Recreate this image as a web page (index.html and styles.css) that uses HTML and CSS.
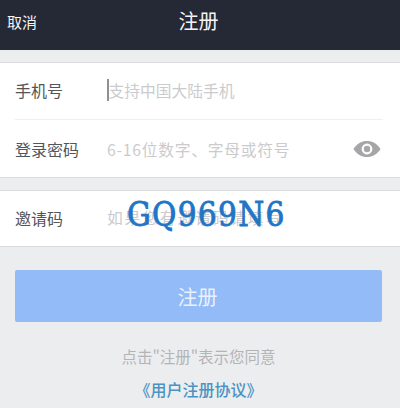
FILE: index.html
```html
<!DOCTYPE html>
<html lang="zh">
<head>
<meta charset="utf-8">
<title>注册</title>
<link rel="stylesheet" href="styles.css">
</head>
<body>
<header class="topbar">
  <span class="cancel">取消</span>
  <span class="title">注册</span>
</header>
<section class="group group-first">
  <div class="row row-divided">
    <span class="label">手机号</span>
    <span class="caret"></span>
    <span class="hint">支持中国大陆手机</span>
  </div>
  <div class="row row-second">
    <span class="label">登录密码</span>
    <span class="hint hint-digits">6-16位数字、字母或符号</span>
    <svg class="eye" viewBox="0 0 28 18" aria-hidden="true">
      <path fill="#a6a6a8" fill-rule="evenodd" d="M0.5 9C4 3.4 8.6 1 14 1s10 2.4 13.500 8C24 14.600 19.400 17 14 17S4 14.600 0.500 9ZM14 3.600a5.400 5.400 0 1 0 0 10.800a5.400 5.400 0 1 0 0-10.800Z"/>
      <circle cx="14" cy="9" r="3.200" fill="#a6a6a8"/>
    </svg>
  </div>
</section>
<section class="group group-invite">
  <div class="row row-invite">
    <span class="label">邀请码</span>
    <span class="hint hint-invite">如果您有邀请码请填写</span>
    <span class="stamp">GQ969N6</span>
  </div>
</section>
<button class="submit">注册</button>
<p class="agree">点击"注册"表示您同意</p>
<p class="link">《用户注册协议》</p>
</body>
</html>
```
FILE: styles.css
```css
* { box-sizing: border-box; }
html, body { margin: 0; padding: 0; }
body {
  width: 400px;
  height: 408px;
  overflow: hidden;
  background: #ecedef;
  font-family: "Noto Sans CJK SC", "Liberation Sans", sans-serif;
}
.topbar {
  height: 50px;
  background: #252835;
  color: #f4f4f6;
  position: relative;
  display: flex;
  align-items: center;
  justify-content: center;
}
.cancel {
  position: absolute;
  left: 7px;
  top: 12px;
  font-size: 15px;
  line-height: 20px;
}
.title { font-size: 20px; line-height: 26px; margin: -9px 3px 0 0; }
.group {
  background: #fff;
  border-top: 1px solid #dcdcde;
}
.group-first { margin-top: 12px; height: 116px; border-bottom: 1px solid #dcdcde; }
.group-invite { margin-top: 12px; height: 57px; border-bottom: 1px solid #d9d9db; }
.row {
  display: flex;
  align-items: center;
  padding-left: 15px;
  position: relative;
}
.row-divided { height: 57px; padding-bottom: 3px; }
.row-divided::after {
  content: "";
  position: absolute;
  left: 15px;
  right: 17px;
  bottom: 0;
  height: 1px;
  background: #f0f0f2;
}
.row-second { height: 58px; }
.row-invite { height: 55px; padding-bottom: 2px; }
.label {
  width: 92px;
  flex: none;
  font-size: 16px;
  color: #555558;
}
.caret {
  width: 1.500px;
  height: 22px;
  background: #8f8f94;
  flex: none;
}
.hint {
  font-size: 15.750px;
  color: #cbcbce;
  white-space: nowrap;
}
.hint-digits { letter-spacing: 0.750px; flex: 1; }
.hint-invite { letter-spacing: 1.850px; }
.eye { width: 28px; height: 18px; flex: none; margin-right: 19px; }
.stamp {
  position: absolute;
  left: 127px;
  top: 2px;
  font-family: "DejaVu Serif Condensed", "DejaVu Serif", serif;
  font-stretch: condensed;
  font-size: 33px;
  line-height: 44px;
  letter-spacing: 1.300px;
  color: #1f75c6;
  -webkit-text-stroke: 0.800px #1f75c6;
}
.submit {
  display: block;
  width: 367px;
  height: 52px;
  margin: 23px 0 0 15px;
  border: 0;
  border-radius: 2px;
  background: #93bbf7;
  color: #e9f1fd;
  font-family: inherit;
  font-size: 20px;
  padding: 0 2px 0 0;
}
.agree {
  margin: 22px 0 0;
  text-align: center;
  font-size: 15.500px;
  line-height: 24px;
  color: #b4b4b7;
  padding-right: 3px;
}
.link {
  margin: 9px 0 0;
  text-align: center;
  font-size: 16px;
  font-weight: 500;
  line-height: 24px;
  color: #4a93c4;
  padding-right: 3px;
}
```
